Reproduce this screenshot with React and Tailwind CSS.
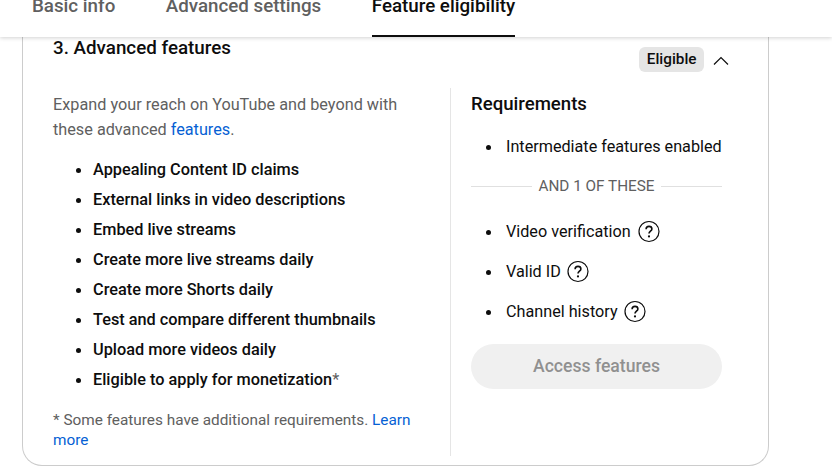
import React from 'react';

const features = [
  'Appealing Content ID claims',
  'External links in video descriptions',
  'Embed live streams',
  'Create more live streams daily',
  'Create more Shorts daily',
  'Test and compare different thumbnails',
  'Upload more videos daily',
];

const HelpIcon = () => (
  <svg width="22" height="22" viewBox="0 0 22 22" fill="none" className="shrink-0">
    <circle cx="11" cy="11" r="10" stroke="#0d0d0d" strokeWidth="1.2" />
    <path d="M8.1 8.7c0-1.7 1.3-2.8 2.9-2.8s2.9 1 2.9 2.6c0 2.2-2.9 2.3-2.9 4.6" stroke="#0d0d0d" strokeWidth="1.6" />
    <circle cx="11" cy="15.9" r="1.1" fill="#0d0d0d" />
  </svg>
);

const Bullet = ({ children, gap }) => (
  <li className="flex items-center">
    <span className={`w-[5px] h-[5px] rounded-full bg-[#0d0d0d] shrink-0 ${gap}`}></span>
    {children}
  </li>
);

const App = () => {
  return (
    <div className="w-[832px] h-[474px] overflow-hidden bg-white text-[#0d0d0d] flex flex-col font-['Roboto',sans-serif]">
      {/* Tabs, scrolled partly off the top */}
      <div className="h-[37px] shrink-0 bg-white shadow-[0_1px_4px_rgba(0,0,0,0.18)] z-10 flex items-end pl-[32px] gap-[50.5px] overflow-hidden text-[18.75px] leading-[24px] font-medium">
        <div className="h-[37px] flex flex-col justify-end text-[#606060]">
          <span className="mb-[19px] whitespace-nowrap">Basic info</span>
        </div>
        <div className="h-[37px] flex flex-col justify-end text-[#606060]">
          <span className="mb-[19px] whitespace-nowrap">Advanced settings</span>
        </div>
        <div className="h-[37px] flex flex-col justify-end border-b-2 border-[#0d0d0d]">
          <span className="mb-[17px] whitespace-nowrap">Feature eligibility</span>
        </div>
      </div>

      {/* Card */}
      <div className="ml-[22px] w-[747px] h-[429px] shrink-0 border border-t-0 border-[#cccccc] rounded-b-[20px] flex flex-col">
        <div className="flex justify-between pl-[30px] pr-[38px] h-[51px]">
          <h2 className="text-[18.8px] leading-[20px] font-medium pt-[1px]">3. Advanced features</h2>
          <div className="flex items-center h-[25px] mt-[10px] gap-[8px]">
            <span className="h-[25px] px-[7.5px] rounded-[6px] bg-[#e5e5e5] text-[15.3px] leading-[25px] font-medium">Eligible</span>
            <svg width="18" height="18" viewBox="0 0 18 18" fill="none">
              <path d="M2 13.5L9 6.5L16 13.5" stroke="#0d0d0d" strokeWidth="1.2" />
            </svg>
          </div>
        </div>

        <div className="flex pl-[30px]">
          <div className="w-[398px] h-[368px] border-r border-[#e5e5e5] flex flex-col">
            <p className="text-[16.24px] leading-[25px] text-[#606060] pt-[4px] w-[360px]">
              Expand your reach on YouTube and beyond with these advanced <span className="text-[#065fd4]">features</span>.
            </p>
            <ul className="mt-[18px] pl-[23px] flex flex-col gap-[10px] text-[16.3px] leading-[20px] font-medium">
              {features.map((f) => (
                <Bullet key={f} gap="mr-[12px]">{f}</Bullet>
              ))}
              <Bullet gap="mr-[12px]">
                <span>Eligible to apply for monetization<span className="font-normal text-[#606060]">*</span></span>
              </Bullet>
            </ul>
            <p className="mt-[20px] text-[15.35px] leading-[20px] text-[#606060] w-[370px]">
              * Some features have additional requirements. <span className="text-[#065fd4]">Learn more</span>
            </p>
          </div>

          <div className="w-[251px] ml-[20px] flex flex-col">
            <h3 className="text-[18.6px] leading-[24px] font-medium pt-[4px]">Requirements</h3>
            <ul className="mt-[21px] pl-[15px] text-[16.2px] leading-[20px]">
              <Bullet gap="mr-[15px]">Intermediate features enabled</Bullet>
            </ul>
            <div className="mt-[19px] flex items-center gap-[6px] text-[15.3px] leading-[20px] text-[#606060] whitespace-nowrap">
              <span className="flex-1 h-px bg-[#e0e0e0]"></span>
              AND 1 OF THESE
              <span className="flex-1 h-px bg-[#e0e0e0]"></span>
            </div>
            <ul className="mt-[25px] pl-[15px] flex flex-col gap-[18px] text-[16.2px] leading-[22px]">
              <Bullet gap="mr-[15px]">Video verification<span className="ml-[7px] -translate-y-[0.5px]"><HelpIcon /></span></Bullet>
              <Bullet gap="mr-[15px]">Valid ID<span className="ml-[6.5px] -translate-y-[0.5px]"><HelpIcon /></span></Bullet>
              <Bullet gap="mr-[15px]">Channel history<span className="ml-[6.5px] -translate-y-[0.5px]"><HelpIcon /></span></Bullet>
            </ul>
            <button className="mt-[21px] h-[45px] rounded-full bg-[#f0f0f0] text-[#909090] text-[17.6px] font-medium">
              Access features
            </button>
          </div>
        </div>
      </div>
    </div>
  );
};

export default App;
